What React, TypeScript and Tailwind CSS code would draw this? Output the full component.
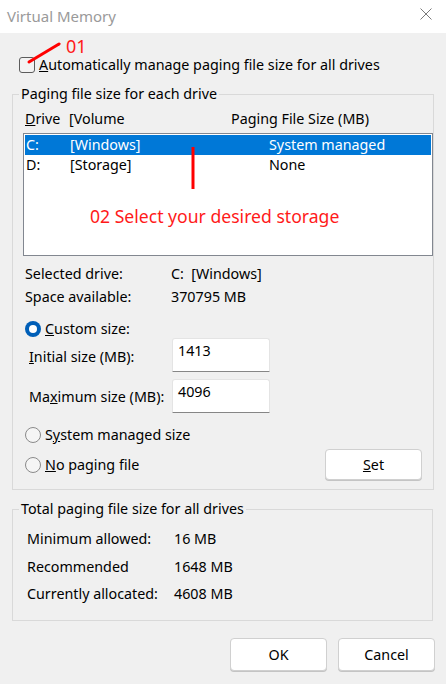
import React from "react";

const font = { fontFamily: '"Noto Sans", "Open Sans", sans-serif' };

// Windows-style radio button
const Radio = ({ checked }: { checked?: boolean }) =>
    checked ? (
        <span className="w-[16px] h-[16px] rounded-full bg-[#005fb8] flex items-center justify-center shrink-0">
            <span className="w-[8px] h-[8px] rounded-full bg-white" />
        </span>
    ) : (
        <span className="w-[16px] h-[16px] rounded-full border border-[#8a8a8a] bg-[#f5f5f5] shrink-0" />
    );

const Btn = ({ children, className = "" }: { children: React.ReactNode; className?: string }) => (
    <div className={"bg-white border border-[#d0d0d0] rounded-[4px] flex items-center justify-center text-black shadow-[0_1px_0_#c4c4c4] " + className}>
        {children}
    </div>
);

const SizeInput = ({ value }: { value: string }) => (
    <div className="w-[98px] h-[34px] bg-white border border-[#e4e4e4] border-b-[#868686] rounded-t-[3px] pl-[5px] pt-[2px] leading-[20px] text-black">
        {value}
    </div>
);

const App = () => {
    return (
        <div className="relative w-[446px] h-[684px] bg-[#f0f0f0] flex flex-col text-[14.3px] text-black overflow-hidden" style={font}>
            {/* Title bar */}
            <div className="h-[33px] bg-white flex items-center pl-[7px] pr-[14px] shrink-0">
                <div className="text-[15px] text-[#9a9a9a] leading-[20px] -mt-[2px]">Virtual Memory</div>
                <div className="flex-1" />
                <svg width="12" height="12" viewBox="0 0 12 12" className="-mt-[5px]">
                    <path d="M0.5 0.5 L11.5 11.5 M11.5 0.5 L0.5 11.5" stroke="#7a7a7a" strokeWidth="1" />
                </svg>
            </div>

            {/* Automatic management checkbox */}
            <div className="mt-[22px] h-[20px] flex items-center pl-[19px] leading-[20px]">
                <span className="w-[16px] h-[16px] rounded-[3px] border border-[#5c5c5c] bg-[#f3f3f3] shrink-0" />
                <span className="ml-[4px]"><u>A</u>utomatically manage paging file size for all drives</span>
            </div>

            {/* Paging file size for each drive */}
            <fieldset className="mt-[9px] ml-[12px] w-[421px] border border-[#d9d9d9] pb-[9px]">
                <legend className="ml-[6px] px-[2px] leading-[20px]">Paging file size for each drive</legend>
                <div className="mt-[5px] h-[20px] flex items-center leading-[20px] pl-[12px]">
                    <span className="w-[44px]"><u>D</u>rive</span>
                    <span className="w-[162px]">[Volume</span>
                    <span>Paging File Size (MB)</span>
                </div>
                <div className="mt-[4px] ml-[10px] w-[410px] h-[123px] bg-white border border-[#828790] p-[1px]">
                    <div className="h-[20px] bg-[#0078d7] text-white flex items-center leading-[20px] pl-[1px]">
                        <span className="w-[44px]">C:</span>
                        <span className="w-[199px]">[Windows]</span>
                        <span>System managed</span>
                    </div>
                    <div className="h-[20px] flex items-center leading-[20px] pl-[1px]">
                        <span className="w-[44px]">D:</span>
                        <span className="w-[199px]">[Storage]</span>
                        <span>None</span>
                    </div>
                </div>
                <div className="mt-[8px] h-[20px] flex items-center leading-[20px] pl-[12px]">
                    <span className="w-[146px]">Selected drive:</span>
                    <span>C:&nbsp;&nbsp;[Windows]</span>
                </div>
                <div className="mt-[3px] h-[20px] flex items-center leading-[20px] pl-[12px]">
                    <span className="w-[146px]">Space available:</span>
                    <span>370795 MB</span>
                </div>
                <div className="mt-[12px] h-[19px] flex items-center leading-[20px] pl-[12px]">
                    <Radio checked />
                    <span className="ml-[4px]"><u>C</u>ustom size:</span>
                </div>
                <div className="flex items-start pl-[16px]">
                    <span className="w-[143px] mt-[9px] leading-[20px]"><u>I</u>nitial size (MB):</span>
                    <SizeInput value="1413" />
                </div>
                <div className="mt-[7px] flex items-start pl-[16px]">
                    <span className="w-[143px] mt-[8px] leading-[20px]">Ma<u>x</u>imum size (MB):</span>
                    <SizeInput value="4096" />
                </div>
                <div className="mt-[12px] h-[20px] flex items-center leading-[20px] pl-[12px]">
                    <Radio />
                    <span className="ml-[4px]">S<u>y</u>stem managed size</span>
                </div>
                <div className="mt-[4px] h-[31px] flex items-center leading-[20px] pl-[12px]">
                    <Radio />
                    <span className="ml-[4px]"><u>N</u>o paging file</span>
                    <div className="flex-1" />
                    <Btn className="w-[97px] h-[31px] mr-[11px]"><u>S</u>et</Btn>
                </div>
            </fieldset>

            {/* Totals for all drives */}
            <fieldset className="mt-[9px] ml-[12px] w-[421px] border border-[#d9d9d9] pb-[16px]">
                <legend className="ml-[6px] px-[2px] leading-[20px]">Total paging file size for all drives</legend>
                <div className="mt-[10px] h-[20px] flex items-center leading-[20px] pl-[14px]">
                    <span className="w-[147px]">Minimum allowed:</span>
                    <span>16 MB</span>
                </div>
                <div className="mt-[8px] h-[20px] flex items-center leading-[20px] pl-[14px]">
                    <span className="w-[147px]">Recommended</span>
                    <span>1648 MB</span>
                </div>
                <div className="mt-[7px] h-[20px] flex items-center leading-[20px] pl-[14px]">
                    <span className="w-[147px]">Currently allocated:</span>
                    <span>4608 MB</span>
                </div>
            </fieldset>

            <div className="mt-[17px] flex justify-end gap-[11px] pr-[11px]">
                <Btn className="w-[97px] h-[33px]">OK</Btn>
                <Btn className="w-[97px] h-[33px]">Cancel</Btn>
            </div>

            {/* Red step markers drawn over the dialog */}
            <svg className="absolute left-0 top-0 pointer-events-none" width="446" height="684">
                <line x1="29" y1="62" x2="59" y2="44" stroke="#f00" strokeWidth="3" strokeLinecap="round" />
                <line x1="193" y1="147" x2="193" y2="189" stroke="#f00" strokeWidth="3" />
            </svg>
            <div className="absolute left-[66px] top-[37px] text-[18px] leading-[18px] text-[#ff1a1a]">01</div>
            <div className="absolute left-[90px] top-[204px] text-[17.6px] leading-[24px] text-[#ff1a1a]">02 Select your desired storage</div>
        </div>
    );
};

export default App;
